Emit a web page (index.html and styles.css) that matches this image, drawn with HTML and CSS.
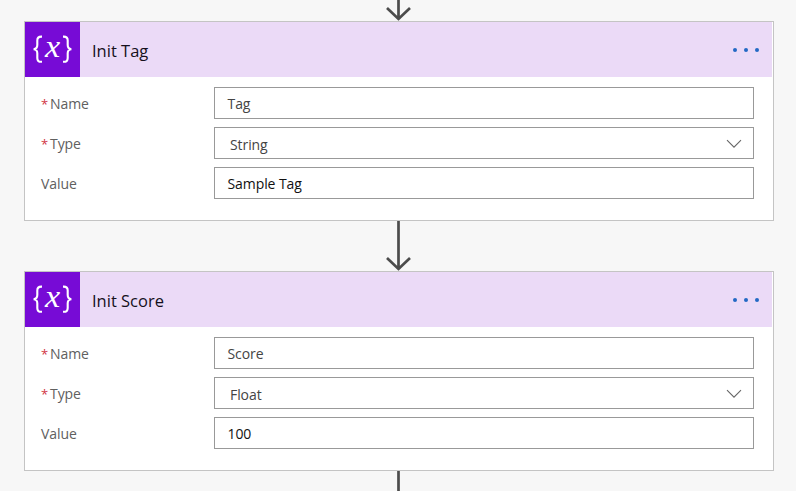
FILE: index.html
```
<!DOCTYPE html>
<html lang="en">
<head>
<meta charset="utf-8">
<title>Flow</title>
<link rel="stylesheet" href="styles.css">
</head>
<body>
<svg width="0" height="0" class="defs">
  <symbol id="variable" viewBox="0 0 55 55" overflow="visible">
    <path d="M17 14.6h-.8c-2.7 0-3.9 1.3-3.9 3.9v4.6c0 2.6-1.2 3.9-3.7 4.1 2.5.2 3.7 1.5 3.7 4.1v4.6c0 2.6 1.2 3.9 3.9 3.9h.8M38 14.6h.8c2.7 0 3.9 1.3 3.9 3.9v4.6c0 2.6 1.2 3.9 3.7 4.1-2.5.2-3.7 1.5-3.7 4.1v4.6c0 2.6-1.2 3.9-3.9 3.9H38" fill="none" stroke="#fff" stroke-width="2.1"/>
  </symbol>
  <symbol id="arrow" viewBox="0 0 28 50">
    <path d="M14.5 0v48M3 37l11.5 11L26 37" fill="none" stroke="#4c4c4c" stroke-width="2.7"/>
  </symbol>
  <symbol id="chevron" viewBox="0 0 16 10">
    <path d="M1 1.2l7 7 7-7" fill="none" stroke="#666" stroke-width="1.1"/>
  </symbol>
</svg>
<main class="flow">
  <svg class="connector incoming" viewBox="0 29 28 21"><use href="#arrow" width="28" height="50"/></svg>
  <section class="card">
    <header class="head">
      <svg class="icon" viewBox="0 0 55 55"><use href="#variable" width="55" height="55"/><text transform="translate(20 35.2) scale(1.1 1)" class="symbol-x">x</text></svg>
      <h2 class="title">Init Tag</h2>
      <span class="more"><i></i><i></i><i></i></span>
    </header>
    <div class="fields">
      <div class="row"><span class="label"><b>*</b>Name</span><div class="box">Tag</div></div>
      <div class="row"><span class="label"><b>*</b>Type</span><div class="box select">String<svg class="chevron"><use href="#chevron"/></svg></div></div>
      <div class="row"><span class="label">Value</span><div class="box value">Sample Tag</div></div>
    </div>
  </section>
  <svg class="connector" viewBox="0 0 28 50"><use href="#arrow" width="28" height="50"/></svg>
  <section class="card">
    <header class="head">
      <svg class="icon" viewBox="0 0 55 55"><use href="#variable" width="55" height="55"/><text transform="translate(20 35.2) scale(1.1 1)" class="symbol-x">x</text></svg>
      <h2 class="title">Init Score</h2>
      <span class="more"><i></i><i></i><i></i></span>
    </header>
    <div class="fields">
      <div class="row"><span class="label"><b>*</b>Name</span><div class="box">Score</div></div>
      <div class="row"><span class="label"><b>*</b>Type</span><div class="box select">Float<svg class="chevron"><use href="#chevron"/></svg></div></div>
      <div class="row"><span class="label">Value</span><div class="box value">100</div></div>
    </div>
  </section>
  <svg class="connector outgoing" viewBox="0 0 28 20"><use href="#arrow" width="28" height="50"/></svg>
</main>
</body>
</html>
```
FILE: styles.css
```
* { box-sizing: border-box; }
body {
  margin: 0;
  background: #f7f7f7;
  font: 14px/20px "Open Sans", "Noto Sans", sans-serif;
  letter-spacing: -0.08px;
}
.defs { position: absolute; }
.flow {
  display: flex;
  flex-direction: column;
  width: 750px;
  margin-left: 24px;
}
.connector {
  width: 28px;
  height: 50px;
  margin-left: 360px;
  flex: none;
}
.incoming { height: 21px; }
.outgoing { height: 20px; }
.card {
  height: 200px;
  flex: none;
  border: 1px solid #c4c4c4;
  background: #fff;
}
.head {
  display: flex;
  align-items: center;
  height: 55px;
  margin-right: 1px;
  background: #ebdaf7;
}
.icon {
  width: 55px;
  height: 55px;
  background: #770bd6;
}
.symbol-x {
  font: italic 31px "Liberation Serif", serif;
  letter-spacing: 0;
  fill: #fff;
}
.title {
  flex: 1;
  margin: 2px 0 0 12px;
  font-size: 16.5px;
  font-weight: 400;
  line-height: 22px;
  letter-spacing: 0;
  color: #15101c;
}
.more {
  display: flex;
  gap: 7px;
  margin: 1px 13px 0 0;
}
.more i {
  width: 4px;
  height: 4px;
  border-radius: 50%;
  background: #2368c4;
}
.fields {
  display: flex;
  flex-direction: column;
  gap: 8px;
  padding: 10px 19px 0 16px;
}
.row {
  display: flex;
  align-items: center;
  height: 32px;
}
.label {
  width: 173px;
  padding-top: 2px;
  color: #606060;
}
.label b {
  display: inline-block;
  width: 9px;
  font-weight: 400;
  font-size: 13px;
  color: #d13444;
}
.box {
  display: flex;
  align-items: center;
  width: 540px;
  height: 32px;
  padding: 2px 12px 0 12.5px;
  border: 1px solid #999;
  color: #444;
}
.select {
  justify-content: space-between;
  padding: 3px 11.5px 0 15px;
}
.value { color: #111; }
.chevron {
  width: 16px;
  height: 10px;
  margin-bottom: 1px;
}
```
